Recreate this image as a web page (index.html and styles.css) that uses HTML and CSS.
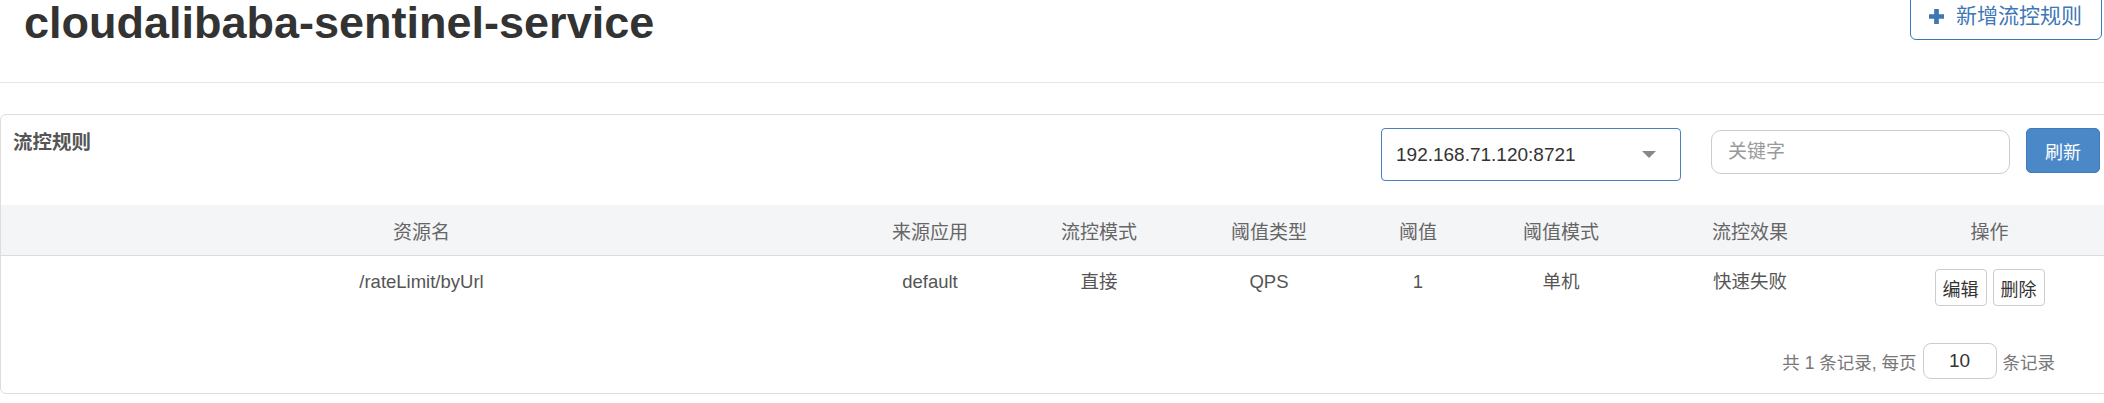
FILE: index.html
```html
<!DOCTYPE html>
<html lang="zh-CN">
<head>
    <meta charset="UTF-8">
    <meta name="viewport" content="width=device-width, initial-scale=1.0">
    <title>流控规则</title>
    <link rel="stylesheet" href="styles.css">
</head>
<body>
    <div class="page-header">
        <h1>cloudalibaba-sentinel-service</h1>
        <button class="btn-add">
            <svg class="icon-plus" viewBox="0 0 16 16" width="16" height="16">
                <path d="M5.5 0h5v5.5h5.5v5h-5.5v5.5h-5v-5.5h-5.5v-5h5.5z" fill="currentColor"/>
            </svg>
            <span>新增流控规则</span>
        </button>
    </div>

    <div class="panel">
        <div class="panel-head">
            <span class="panel-title">流控规则</span>
            <div class="tools">
                <div class="select">
                    <span>192.168.71.120:8721</span>
                    <span class="caret"></span>
                </div>
                <input class="search" type="text" placeholder="关键字">
                <button class="btn-refresh">刷新</button>
            </div>
        </div>

        <table class="rules">
            <colgroup>
                <col class="c-res">
                <col class="c-app">
                <col class="c-mode">
                <col class="c-type">
                <col class="c-count">
                <col class="c-cluster">
                <col class="c-effect">
                <col class="c-ops">
            </colgroup>
            <thead>
                <tr>
                    <th>资源名</th>
                    <th>来源应用</th>
                    <th>流控模式</th>
                    <th>阈值类型</th>
                    <th>阈值</th>
                    <th>阈值模式</th>
                    <th>流控效果</th>
                    <th>操作</th>
                </tr>
            </thead>
            <tbody>
                <tr>
                    <td>/rateLimit/byUrl</td>
                    <td>default</td>
                    <td>直接</td>
                    <td>QPS</td>
                    <td>1</td>
                    <td>单机</td>
                    <td>快速失败</td>
                    <td>
                        <div class="ops">
                            <button class="btn-small">编辑</button>
                            <button class="btn-small">删除</button>
                        </div>
                    </td>
                </tr>
            </tbody>
        </table>

        <div class="pager">
            <span>共 1 条记录, 每页</span>
            <input class="page-size" type="text" value="10">
            <span>条记录</span>
        </div>
    </div>
</body>
</html>
```

FILE: styles.css
```css
/* General */
body {
    margin: 0;
    font-family: "Liberation Sans", "Noto Sans CJK SC", sans-serif;
    color: #333;
    background: #fff;
    overflow: hidden;
}

button,
input {
    font-family: inherit;
    box-sizing: border-box;
}

/* Page header */
.page-header {
    display: flex;
    justify-content: space-between;
    align-items: flex-start;
    height: 82px;
    padding: 0 2px 0 24px;
    border-bottom: 1px solid #e5e5e5;
}

.page-header h1 {
    margin: 0;
    font-size: 45px;
    line-height: 45px;
    font-weight: bold;
    color: #333;
}

.btn-add {
    display: flex;
    align-items: center;
    gap: 12px;
    height: 48px;
    margin-top: -8px;
    padding: 0 19px 0 18px;
    border: 1px solid #3a76b5;
    border-radius: 6px;
    background: #fff;
    color: #3d77b6;
    font-size: 21px;
    line-height: 24px;
}

.icon-plus {
    width: 15px;
    height: 15px;
}

/* Panel */
.panel {
    width: calc(100% + 20px);
    box-sizing: border-box;
    margin-top: 31px;
    border: 1px solid #ddd;
    border-radius: 6px;
}

.panel-head {
    display: flex;
    justify-content: space-between;
    align-items: flex-start;
    padding: 13px 23px 24px 12px;
}

.panel-title {
    font-size: 19.5px;
    line-height: 28px;
    font-weight: bold;
    color: #555;
}

.tools {
    display: flex;
    align-items: flex-start;
}

.select {
    display: flex;
    justify-content: space-between;
    align-items: center;
    width: 300px;
    height: 53px;
    box-sizing: border-box;
    padding: 0 24px 0 14px;
    border: 1px solid #4a80bf;
    border-radius: 4px;
    font-size: 19px;
    color: #333;
}

.caret {
    width: 0;
    height: 0;
    border-left: 7px solid transparent;
    border-right: 7px solid transparent;
    border-top: 7px solid #888;
}

.search {
    width: 299px;
    height: 44px;
    margin: 2px 0 0 30px;
    padding: 0 16px;
    border: 1px solid #ccc;
    border-radius: 10px;
    font-size: 19px;
    color: #333;
}

.search::placeholder {
    color: #999;
}

.btn-refresh {
    width: 74px;
    height: 45px;
    margin-left: 16px;
    border: 1px solid #3f7bbd;
    border-radius: 5px;
    background: #4a88c7;
    color: #fff;
    font-size: 18px;
}

/* Table */
.rules {
    width: 100%;
    border-collapse: collapse;
    table-layout: fixed;
}

.c-res { width: 841px; }
.c-app { width: 176px; }
.c-mode { width: 162px; }
.c-type { width: 178px; }
.c-count { width: 120px; }
.c-cluster { width: 166px; }
.c-effect { width: 212px; }
.c-ops { width: 267px; }

.rules th {
    height: 50px;
    padding: 0;
    background: #f4f5f7;
    border-bottom: 1px solid #ddd;
    font-weight: normal;
    font-size: 19px;
    color: #666;
    text-align: center;
}

.rules td {
    padding: 13px 0;
    vertical-align: top;
    text-align: center;
    font-size: 18.5px;
    line-height: 25px;
    color: #555;
}

.ops {
    display: flex;
    justify-content: center;
    gap: 6px;
}

.btn-small {
    height: 37px;
    padding: 0 7px;
    border: 1px solid #ccc;
    border-radius: 4px;
    background: #fff;
    color: #333;
    font-size: 18px;
}

/* Pager */
.pager {
    display: flex;
    justify-content: flex-end;
    align-items: center;
    gap: 6px;
    padding: 24px 68px 14px 0;
    font-size: 17.5px;
    color: #777;
}

.page-size {
    width: 74px;
    height: 36px;
    border: 1px solid #ccc;
    border-radius: 8px;
    text-align: center;
    font-size: 19px;
    color: #333;
}
```
